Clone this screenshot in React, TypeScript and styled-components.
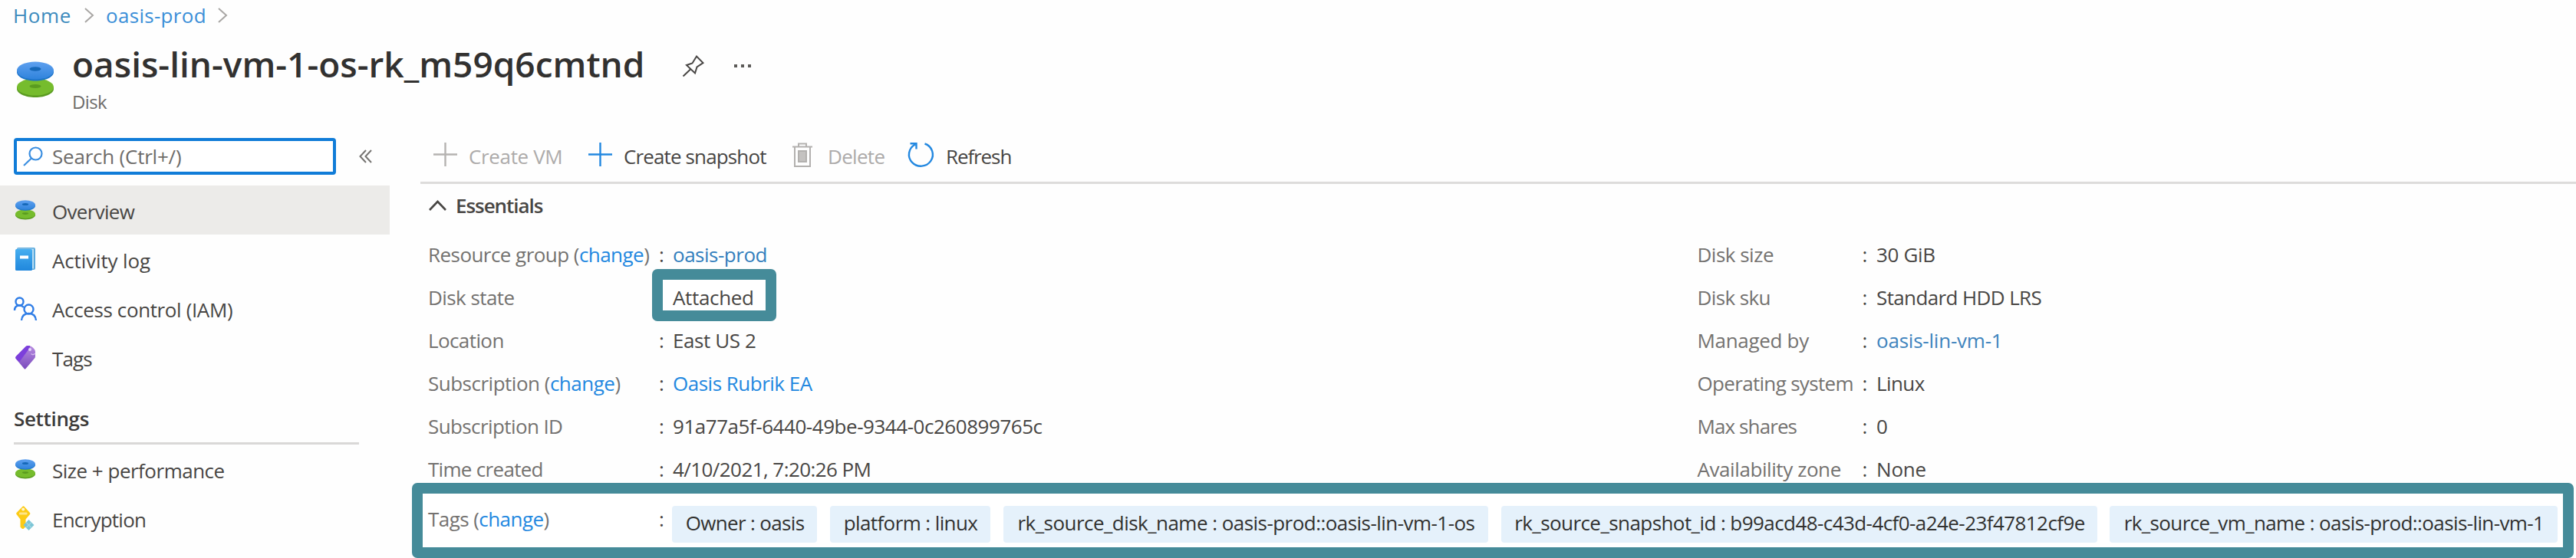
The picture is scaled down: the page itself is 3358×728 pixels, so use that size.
import React from 'react';
import styled, { createGlobalStyle } from 'styled-components';

const TEAL = '#458b99';

const GlobalStyle = createGlobalStyle`
  * { box-sizing: border-box; }
  body {
    margin: 0;
    background: #fefefe;
    color: #484644;
    font: 26px/34px 'Open Sans', 'Noto Sans', sans-serif;
    overflow: hidden;
  }
`;

const Page = styled.div`
  display: flex;
  flex-direction: column;
  width: 3358px;
  height: 728px;
  overflow: hidden;
`;

const Text = styled.span<{ $track?: number; $color?: string; $weight?: number }>`
  letter-spacing: ${p => p.$track ?? 0}px;
  color: ${p => p.$color ?? 'inherit'};
  font-weight: ${p => p.$weight ?? 400};
  white-space: pre;
`;

const Link = styled.a<{ $color?: string }>`
  color: ${p => p.$color ?? '#2388e0'};
  text-decoration: none;
`;

const Icon = styled.svg`
  display: block;
  flex: none;
  overflow: visible;
`;

/* Header */

const Breadcrumb = styled.nav`
  display: flex;
  align-items: center;
  height: 40px;
  padding-left: 17px;
`;

const Crumb = styled.div<{ $width: number }>`
  width: ${p => p.$width}px;
`;

const CrumbArrow = styled(Icon)`
  margin-right: 15px;
`;

const Header = styled.header`
  display: flex;
  height: 120px;
  padding: 13px 0 0 22px;
`;

const HeaderIcon = styled.div`
  width: 72px;
  padding-top: 27px;
`;

const Titles = styled.div`
  width: 796px;
`;

const Title = styled.h1`
  margin: 0;
  height: 60px;
  font-size: 46px;
  line-height: 60px;
  font-weight: 600;
  letter-spacing: 0;
  color: #323130;
  white-space: nowrap;
`;

const Subtitle = styled.div`
  margin-top: 4px;
  font-size: 24px;
  line-height: 32px;
  letter-spacing: -0.63px;
  color: #6e6c6a;
`;

const HeaderActions = styled.div`
  display: flex;
  align-items: flex-start;
  gap: 39px;
  padding-top: 19px;
`;

const Body = styled.div`
  display: flex;
  flex: 1;
`;

/* Sidebar */

const Sidebar = styled.aside`
  width: 548px;
  padding-top: 20px;
`;

const SearchRow = styled.div`
  display: flex;
  align-items: center;
  gap: 30px;
  height: 48px;
  margin: 0 0 14px 18px;
`;

const SearchBox = styled.div`
  display: flex;
  align-items: center;
  gap: 12px;
  width: 420px;
  height: 48px;
  padding: 0 0 0 8px;
  border: 4px solid #107cd8;
  border-radius: 4px;
  background: #fff;
  color: #6e6c6a;
`;

const NavItem = styled.div<{ $active?: boolean }>`
  display: flex;
  align-items: center;
  width: 508px;
  height: 64px;
  padding-left: 18px;
  background: ${p => (p.$active ? '#ecebe9' : 'transparent')};
`;

const NavIcon = styled.div`
  width: 50px;
  padding-left: 2px;
`;

const NavLabel = styled(Text)`
  padding-top: 3px;
`;

const SectionTitle = styled.h2`
  display: flex;
  align-items: flex-end;
  width: 450px;
  height: 82px;
  margin: 0 0 0 18px;
  padding-bottom: 14px;
  border-bottom: 3px solid #d9d8d7;
  font-size: 26px;
  color: #3b3a39;
`;

/* Main pane */

const Main = styled.main`
  width: 2810px;
`;

const Toolbar = styled.div`
  display: flex;
  align-items: center;
  height: 80px;
  padding: 6px 0 0 17px;
  border-bottom: 3px solid #dddcdb;
`;

const Command = styled.div<{ $width: number; $gap: number }>`
  display: flex;
  align-items: center;
  gap: ${p => p.$gap}px;
  width: ${p => p.$width}px;
`;

const CommandLabel = styled(Text)`
  padding-top: 4px;
`;

const EssentialsHeader = styled.div`
  display: flex;
  align-items: center;
  gap: 12px;
  height: 64px;
  padding: 0 0 8px 11px;
`;

const Properties = styled.div`
  display: grid;
  grid-template-columns: 1654.5px 1fr;
  padding-left: 10px;
`;

const Property = styled.div<{ $label: number; $colon: number }>`
  display: grid;
  grid-template-columns: ${p => p.$label}px ${p => p.$colon}px auto;
  justify-content: start;
  align-items: center;
  height: 56px;
`;

const Label = styled(Text)`
  color: #747270;
`;

const Highlighted = styled.div`
  position: relative;
  z-index: 0;
`;

const HighlightFrame = styled.div`
  position: absolute;
  z-index: -1;
  left: -27px;
  top: -20px;
  width: 162px;
  height: 68px;
  border: 14px solid ${TEAL};
  border-radius: 7px;
  background: #fff;
`;

const TagsFrame = styled.section`
  position: relative;
  display: grid;
  grid-template-columns: 301px 17px auto;
  justify-content: start;
  width: 2818px;
  height: 98px;
  margin: -10px 0 0 -11px;
  padding-left: 7px;
  border: 14px solid ${TEAL};
  border-radius: 7px;
  background: #fff;
`;

const TagsLabel = styled.div`
  padding-top: 16px;
  color: #747270;
`;

const TagsColon = styled(TagsLabel)`
  color: #484644;
`;

const TagList = styled.div`
  display: flex;
  padding-top: 16px;
`;

const Chip = styled.div<{ $width: number; $after?: number }>`
  width: ${p => p.$width}px;
  height: 48px;
  margin-right: ${p => p.$after ?? 16}px;
  padding-left: 1px;
  border-radius: 4px;
  background: #e5f1fb;
  color: #323130;
  line-height: 45px;
  text-align: center;
`;

/* Icons */

const DiskIcon = ({ size, id }: { size: number; id: string }) => (
  <Icon width={size} height={size} viewBox="0 0 48 48">
    <defs>
      <linearGradient id={`${id}-b`} x1="0" y1="0" x2="0" y2="1">
        <stop offset="0" stopColor="#5ea0ef" />
        <stop offset="1" stopColor="#2f83dc" />
      </linearGradient>
    </defs>
    <path d="M0 34v2c0 6 10.700 11 24 11s24-5 24-11v-2z" fill="#5a9b20" />
    <ellipse cx="24" cy="33.500" rx="24" ry="11" fill="#76bc2d" />
    <ellipse cx="24" cy="32.500" rx="7.500" ry="2.500" fill="#5a9b20" />
    <path d="M0 12v2c0 6.500 10.700 11.500 24 11.500S48 20.500 48 14v-2z" fill="#1c74c9" />
    <ellipse cx="24" cy="12" rx="24" ry="11.500" fill={`url(#${id}-b)`} />
    <ellipse cx="24" cy="10" rx="7.500" ry="2.800" fill="#1668b8" />
  </Icon>
);

const PinIcon = () => (
  <Icon width="28" height="28" viewBox="0 0 28 28" fill="none" stroke="#484644" strokeWidth="2" strokeLinejoin="miter">
    <path d="M18 1.500 26.500 10 18.500 15.500 16 23.500 5 13 12.500 10.500z M10.500 18 0.500 27.500" />
  </Icon>
);

const MoreIcon = () => (
  <Icon width="22" height="28" viewBox="0 0 22 28" fill="#5c5a58">
    <rect x="0" y="12" width="4" height="4" />
    <rect x="9" y="12" width="4" height="4" />
    <rect x="18" y="12" width="4" height="4" />
  </Icon>
);

const ArrowRight = () => (
  <CrumbArrow width="13" height="20" viewBox="0 0 13 20" fill="none" stroke="#a8a6a4" strokeWidth="2">
    <path d="M1 1 11 10 1 19" />
  </CrumbArrow>
);

const SearchIcon = () => (
  <Icon width="26" height="26" viewBox="0 0 26 26" fill="none" stroke="#3a8ee0" strokeWidth="2.200">
    <circle cx="16.500" cy="9.500" r="8" />
    <path d="M11 15.500 1 25" />
  </Icon>
);

const CollapseIcon = () => (
  <Icon width="17" height="18" viewBox="0 0 17 18" fill="none" stroke="#757371" strokeWidth="2">
    <path d="M9 1 1.500 9 9 17M16 1 8.500 9 16 17" />
  </Icon>
);

const LogIcon = () => (
  <Icon width="26" height="30" viewBox="0 0 26 30">
    <defs>
      <linearGradient id="log" x1="0" y1="0" x2="0" y2="1">
        <stop offset="0" stopColor="#46aef0" />
        <stop offset="1" stopColor="#2087dc" />
      </linearGradient>
    </defs>
    <rect x="2" y="0" width="24" height="29" rx="2" fill="#5ba9dc" />
    <rect x="3" y="1.500" width="21" height="26" fill="#b9ddf3" />
    <rect x="0" y="2" width="22" height="28" rx="1.500" fill="url(#log)" />
    <rect x="6" y="10.500" width="11" height="4" fill="#fff" />
  </Icon>
);

const PeopleIcon = () => (
  <Icon width="30" height="31" viewBox="0 0 30 31" fill="none" stroke="#2f7de6" strokeWidth="2.400">
    <circle cx="5.500" cy="6.500" r="5" />
    <path d="M-1 18c0-4.500 2.500-6.500 6.500-6.500 2.500 0 4 .8 5.500 2.500" />
    <circle cx="17.500" cy="16.500" r="6" />
    <path d="M8 31c.5-6 4-9 9.500-9s9 3 9.500 9" />
  </Icon>
);

const TagIcon = () => (
  <Icon width="26" height="31" viewBox="0 0 26 31">
    <defs>
      <linearGradient id="tag" x1="0" y1="0" x2="0" y2="1">
        <stop offset="0" stopColor="#b78be0" />
        <stop offset="1" stopColor="#7a4bbd" />
      </linearGradient>
    </defs>
    <path d="M14.500 .8Q15.500 0 17 0L20 .5Q26 4 26 8V14Q26 15.500 25 16.500L13.500 30Q12.500 31 11.500 30L.7 17Q-.5 15.500.7 14.500z" fill="url(#tag)" />
    <path d="M13.500 1Q14.500 0 16 0H19Q19.500 2 17.500 4.500L5 21.500.7 17Q-.5 15.500.7 14z" fill="#7c3fdb" />
    <circle cx="19" cy="5" r="2" fill="#e7d9f8" />
    <path d="M20.500 10.500Q23.500 13 25.500 10" stroke="#d2b8ee" strokeWidth="1.500" fill="none" />
  </Icon>
);

const KeyIcon = () => (
  <Icon width="26" height="32" viewBox="0 0 26 32">
    <path d="M9.500.7Q10.500 0 11.500.7L19 9Q19.800 10 19 11L13.500 17.500V27L10.500 30H9L6.500 27.500V17.500L1.500 11Q.8 10 1.500 9z" fill="#fccb16" />
    <circle cx="10.200" cy="4.600" r="2" fill="#fff5cf" />
    <rect x="5" y="8.500" width="10.500" height="3" rx="1" fill="#fde58a" />
    <path d="M17.500 18 24.500 25 17.500 32 10.500 25z" fill="#7cc5d6" />
    <path d="M14 21.500l7 7M21 21.500l-7 7" stroke="#a2d7e2" strokeWidth="1.200" />
  </Icon>
);

const PlusIcon = ({ color }: { color: string }) => (
  <Icon width="31" height="31" viewBox="0 0 31 31" stroke={color} strokeWidth="2.400" fill="none">
    <path d="M15.500 0V31M0 15.500H31" />
  </Icon>
);

const TrashIcon = () => (
  <Icon width="26" height="32" viewBox="0 0 26 32" fill="none" stroke="#b3b1af" strokeWidth="2">
    <path d="M0 5.500H26M8 5V1.500H18V5M3 6V31H23V6" />
    <rect x="8" y="11" width="10" height="14" fill="#c4c2c0" />
  </Icon>
);

const RefreshIcon = () => (
  <Icon width="34" height="32" viewBox="0 0 34 32" fill="none" stroke="#2388e0" strokeWidth="2.400">
    <path d="M22.500 1.500A15.500 15 0 1 1 10 2.500M3.500 1.200H11.500V8.500" />
  </Icon>
);

const ChevronUp = () => (
  <Icon width="23" height="14" viewBox="0 0 23 14" fill="none" stroke="#484644" strokeWidth="2.600">
    <path d="M1 13 11.500 2 22 13" />
  </Icon>
);

/* Data */

interface Field {
  label: string;
  labelTrack: number;
  change?: boolean;
  value: string;
  valueTrack: number;
  link?: string;
  highlight?: boolean;
}

const leftFields: Field[] = [
  { label: 'Resource group', labelTrack: -0.55, change: true, value: 'oasis-prod', valueTrack: -0.49, link: '#337fbd' },
  { label: 'Disk state', labelTrack: -0.57, value: 'Attached', valueTrack: -0.35, highlight: true },
  { label: 'Location', labelTrack: -0.6, value: 'East US 2', valueTrack: -0.4 },
  { label: 'Subscription', labelTrack: -0.5, change: true, value: 'Oasis Rubrik EA', valueTrack: -0.5, link: '#2388e0' },
  { label: 'Subscription ID', labelTrack: -0.6, value: '91a77a5f-6440-49be-9344-0c260899765c', valueTrack: -0.46 },
  { label: 'Time created', labelTrack: -0.7, value: '4/10/2021, 7:20:26 PM', valueTrack: -0.57 },
];

const rightFields: Field[] = [
  { label: 'Disk size', labelTrack: -0.5, value: '30 GiB', valueTrack: -0.35 },
  { label: 'Disk sku', labelTrack: -0.6, value: 'Standard HDD LRS', valueTrack: -0.62 },
  { label: 'Managed by', labelTrack: -0.32, value: 'oasis-lin-vm-1', valueTrack: -0.22, link: '#4084bd' },
  { label: 'Operating system', labelTrack: -0.68, value: 'Linux', valueTrack: -0.6 },
  { label: 'Max shares', labelTrack: -0.9, value: '0', valueTrack: 0 },
  { label: 'Availability zone', labelTrack: -0.42, value: 'None', valueTrack: -0.2 },
];

const tags = [
  { text: 'Owner : oasis', track: -0.66, width: 189, after: 17 },
  { text: 'platform : linux', track: -0.6, width: 209, after: 17 },
  { text: 'rk_source_disk_name : oasis-prod::oasis-lin-vm-1-os', track: -0.54, width: 632, after: 17 },
  { text: 'rk_source_snapshot_id : b99acd48-c43d-4cf0-a24e-23f47812cf9e', track: -0.57, width: 777, after: 16 },
  { text: 'rk_source_vm_name : oasis-prod::oasis-lin-vm-1', track: -0.61, width: 584, after: 0 },
];

const FieldValue = ({ field }: { field: Field }) => {
  const text = <Text $track={field.valueTrack}>{field.value}</Text>;
  if (field.link) return <Link $color={field.link}>{text}</Link>;
  if (field.highlight) return <Highlighted><HighlightFrame />{text}</Highlighted>;
  return text;
};

const FieldList = ({ fields, label, colon }: { fields: Field[]; label: number; colon: number }) => (
  <div>
    {fields.map(f => (
      <Property key={f.label} $label={label} $colon={colon}>
        <Label $track={f.labelTrack}>
          {f.label}
          {f.change && <> (<Link>change</Link>)</>}
        </Label>
        <span>{f.highlight ? '' : ':'}</span>
        <FieldValue field={f} />
      </Property>
    ))}
  </div>
);

export default function App() {
  return (
    <Page>
      <GlobalStyle />
      <Breadcrumb>
        <Crumb $width={93}><Link $color="#3d8bbd"><Text $track={0.6}>Home</Text></Link></Crumb>
        <ArrowRight />
        <Crumb $width={146}><Link $color="#3b8fd8"><Text $track={0.3}>oasis-prod</Text></Link></Crumb>
        <ArrowRight />
      </Breadcrumb>
      <Header>
        <HeaderIcon><DiskIcon size={48} id="head" /></HeaderIcon>
        <Titles>
          <Title>oasis-lin-vm-1-os-rk_m59q6cmtnd</Title>
          <Subtitle>Disk</Subtitle>
        </Titles>
        <HeaderActions><PinIcon /><MoreIcon /></HeaderActions>
      </Header>
      <Body>
        <Sidebar>
          <SearchRow>
            <SearchBox><SearchIcon /><Text $track={-0.22}>Search (Ctrl+/)</Text></SearchBox>
            <CollapseIcon />
          </SearchRow>
          <NavItem $active><NavIcon><DiskIcon size={26} id="nav" /></NavIcon><NavLabel $track={-0.7}>Overview</NavLabel></NavItem>
          <NavItem><NavIcon><LogIcon /></NavIcon><NavLabel $track={-0.15}>Activity log</NavLabel></NavItem>
          <NavItem><NavIcon><PeopleIcon /></NavIcon><NavLabel $track={-0.38}>Access control (IAM)</NavLabel></NavItem>
          <NavItem><NavIcon><TagIcon /></NavIcon><NavLabel $track={-0.9}>Tags</NavLabel></NavItem>
          <SectionTitle><Text $track={-0.34} $weight={600}>Settings</Text></SectionTitle>
          <NavItem><NavIcon><DiskIcon size={26} id="size" /></NavIcon><NavLabel $track={-0.5}>Size + performance</NavLabel></NavItem>
          <NavItem><NavIcon><KeyIcon /></NavIcon><NavLabel $track={-0.76}>Encryption</NavLabel></NavItem>
        </Sidebar>
        <Main>
          <Toolbar>
            <Command $width={202} $gap={15}><PlusIcon color="#b5b3b1" /><CommandLabel $track={-0.35} $color="#adabaa">Create VM</CommandLabel></Command>
            <Command $width={266} $gap={15}><PlusIcon color="#2388e0" /><CommandLabel $track={-0.87}>Create snapshot</CommandLabel></Command>
            <Command $width={150} $gap={20}><TrashIcon /><CommandLabel $track={-0.7} $color="#adabaa">Delete</CommandLabel></Command>
            <Command $width={140} $gap={16}><RefreshIcon /><CommandLabel $track={-1.1}>Refresh</CommandLabel></Command>
          </Toolbar>
          <EssentialsHeader><ChevronUp /><Text $track={-1.05} $weight={600}>Essentials</Text></EssentialsHeader>
          <Properties>
            <FieldList fields={leftFields} label={301} colon={18} />
            <FieldList fields={rightFields} label={215} colon={18.5} />
          </Properties>
          <TagsFrame>
            <TagsLabel><Text $track={-0.56}>Tags (<Link>change</Link>)</Text></TagsLabel>
            <TagsColon>:</TagsColon>
            <TagList>
              {tags.map(t => (
                <Chip key={t.text} $width={t.width} $after={t.after}><Text $track={t.track}>{t.text}</Text></Chip>
              ))}
            </TagList>
          </TagsFrame>
        </Main>
      </Body>
    </Page>
  );
}
